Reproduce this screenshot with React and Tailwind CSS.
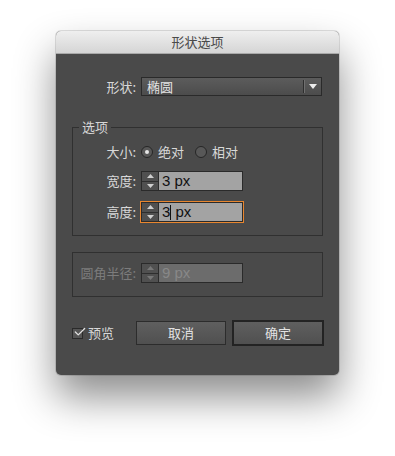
import { Check } from 'lucide-react';

const cjk = { fontFamily: '"Noto Sans CJK SC", "Noto Sans", sans-serif' };
const latin = { fontFamily: '"Liberation Sans", "Noto Sans", sans-serif' };

const Stepper = ({ disabled }) => (
  <div className="flex flex-col w-[17px] h-full border-r border-[#2c2c2c] bg-[#505050]">
    <div className="flex-1 flex items-center justify-center border-b border-[#2e2e2e]">
      <svg width="7" height="4" viewBox="0 0 7 4">
        <path d="M0 4 L3.5 0 L7 4 Z" fill={disabled ? '#777' : '#cfcfcf'} />
      </svg>
    </div>
    <div className="flex-1 flex items-center justify-center">
      <svg width="7" height="4" viewBox="0 0 7 4">
        <path d="M0 0 L7 0 L3.5 4 Z" fill={disabled ? '#777' : '#cfcfcf'} />
      </svg>
    </div>
  </div>
);

const NumberField = ({ value, disabled, focused }) => (
  <div
    className={
      focused
        ? 'flex w-[102px] h-[20px] border border-[#2a2a2a] shadow-[0_0_0_1px_#e8862f]'
        : 'flex w-[102px] h-[20px] border border-[#2a2a2a]'
    }
  >
    <Stepper disabled={disabled} />
    <div
      style={latin}
      className={
        disabled
          ? 'flex-1 flex items-center pl-[3px] bg-[#6c6c6c] text-[#888] text-[15px] whitespace-nowrap'
          : 'flex-1 flex items-center pl-[3px] bg-[#a3a3a3] text-[#111] text-[15px] whitespace-nowrap'
      }
    >
      {focused ? (
        <>
          <span>3</span>
          <span className="w-px h-[15px] bg-[#111]" />
          <span>&nbsp;px</span>
        </>
      ) : (
        value
      )}
    </div>
  </div>
);

const Radio = ({ checked }) => (
  <span className="w-[12px] h-[12px] rounded-full border border-[#262626] bg-[#585858] flex items-center justify-center">
    {checked && <span className="w-[4px] h-[4px] rounded-full bg-[#e6e6e6]" />}
  </span>
);

export default function App() {
  return (
    <div className="min-h-[456px] bg-white pt-[31px] pl-[56px]" style={cjk}>
      <div className="w-[283px] h-[344px] rounded-[5px] overflow-hidden bg-[#4a4a4a] shadow-[0_22px_40px_rgba(0,0,0,0.45),0_0_0_1px_rgba(0,0,0,0.12)] flex flex-col">
        <div className="h-[23px] flex items-center justify-center bg-gradient-to-b from-[#efefef] to-[#d5d5d5] border-b border-[#a9a9a9] text-[13px] text-[#4a4a4a]">
          形状选项
        </div>

        <div className="px-[16px] text-[13px] text-[#d8d8d8] whitespace-nowrap">
          <div className="mt-[23px] flex items-center h-[19px]">
            <span className="w-[65px] text-right pr-[1px]">形状:</span>
            <div className="ml-[4px] w-[181px] h-[19px] flex items-center border border-[#2a2a2a] bg-gradient-to-b from-[#5c5c5c] to-[#4c4c4c]">
              <span className="flex-1 pl-[5px] text-[#e4e4e4]">椭圆</span>
              <span className="w-px h-[13px] bg-[#2e2e2e]" />
              <span className="w-px h-[13px] bg-[#707070]" />
              <span className="w-[16px] flex items-center justify-center">
                <svg width="8" height="5" viewBox="0 0 8 5">
                  <path d="M0 0 L8 0 L4 5 Z" fill="#ececec" />
                </svg>
              </span>
            </div>
          </div>

          <div className="relative mt-[31px] border border-[#303030] pt-[14px] pb-[13px]">
            <span className="absolute -top-[9px] left-[6px] px-[3px] bg-[#4a4a4a] leading-[16px]">选项</span>
            <div className="flex items-center h-[20px]">
              <span className="w-[64px] text-right pr-[1px]">大小:</span>
              <div className="ml-[4px] flex items-center gap-[5px]">
                <Radio checked />
                <span>绝对</span>
              </div>
              <div className="ml-[11px] flex items-center gap-[5px]">
                <Radio />
                <span>相对</span>
              </div>
            </div>
            <div className="mt-[9px] flex items-center h-[20px]">
              <span className="w-[64px] text-right pr-[1px]">宽度:</span>
              <div className="ml-[4px]">
                <NumberField value="3 px" />
              </div>
            </div>
            <div className="mt-[11px] flex items-center h-[20px]">
              <span className="w-[64px] text-right pr-[1px]">高度:</span>
              <div className="ml-[4px]">
                <NumberField focused />
              </div>
            </div>
          </div>

          <div className="mt-[16px] border border-[#303030] pt-[10px] pb-[13px]">
            <div className="flex items-center h-[20px]">
              <span className="w-[64px] text-right pr-[1px] text-[#7c7c7c]">圆角半径:</span>
              <div className="ml-[4px]">
                <NumberField value="9 px" disabled />
              </div>
            </div>
          </div>

          <div className="mt-[23px] flex items-center h-[26px]">
            <span className="shrink-0 w-[11px] h-[11px] border border-[#2a2a2a] bg-[#555] relative">
              <Check size={14} strokeWidth={2.2} className="absolute -top-[4px] left-[0px] text-[#e0e0e0]" />
            </span>
            <span className="shrink-0 ml-[5px]">预览</span>
            <button className="shrink-0 ml-[22px] w-[90px] h-[24px] border border-[#2c2c2c] bg-gradient-to-b from-[#5f5f5f] to-[#505050] text-[13px] text-[#e2e2e2]">
              取消
            </button>
            <button className="shrink-0 ml-[6px] w-[92px] h-[26px] border-2 border-[#232323] bg-gradient-to-b from-[#5f5f5f] to-[#505050] text-[13px] text-[#e2e2e2]">
              确定
            </button>
          </div>
        </div>
      </div>
    </div>
  );
}
